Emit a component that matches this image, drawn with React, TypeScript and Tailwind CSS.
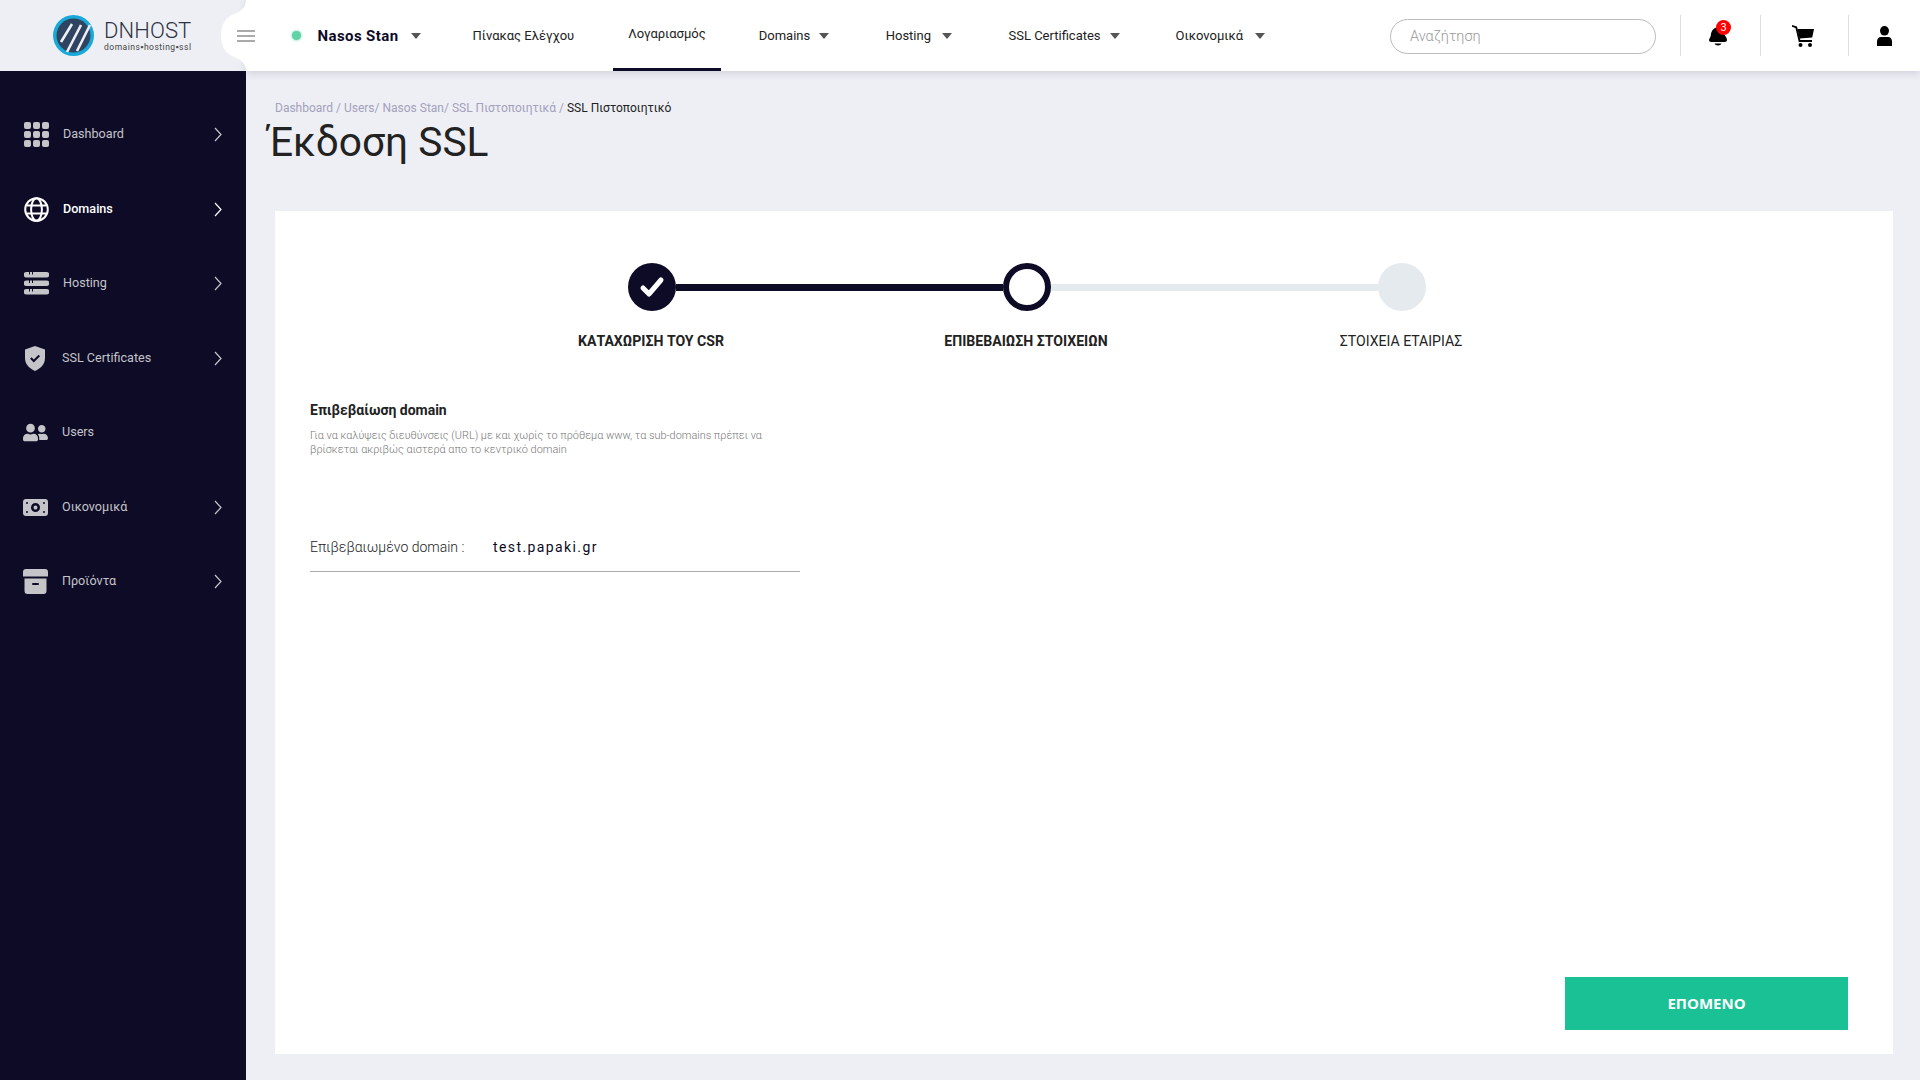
import React from 'react'
import { FaUserFriends } from 'react-icons/fa'

const GridIcon = () => (
  <svg width="25" height="25" viewBox="0 0 25 25" fill="currentColor">
    {[0, 9, 18].flatMap((y) =>
      [0, 9, 18].map((x) => <rect key={`${x}-${y}`} x={x} y={y} width="7" height="7" rx="2" />)
    )}
  </svg>
)

const GlobeIcon = () => (
  <svg width="25" height="25" viewBox="0 0 25 25" fill="none" stroke="currentColor" strokeWidth="2">
    <circle cx="12.5" cy="12.5" r="11.3" />
    <ellipse cx="12.5" cy="12.5" rx="5.4" ry="11.3" />
    <path d="M2.5 8.5h20M2.5 16.5h20" />
  </svg>
)

const ServerIcon = () => (
  <svg width="25" height="23" viewBox="0 0 25 23" fill="currentColor">
    <path d="M2.5 0H5v2.5h1V0h2v2.5h1V0h13.500a2.500 2.500 0 0 1 0 5.500H2.500a2.500 2.500 0 0 1 0-5.500z" />
    <path d="M2.500 8.500H5V11h1V8.500h2V11h1V8.500h13.500a2.500 2.500 0 0 1 0 5.500H2.500a2.500 2.500 0 0 1 0-5.500z" />
    <path d="M2.500 17H5v2.500h1V17h2v2.500h1V17h13.500a2.500 2.500 0 0 1 0 5.500H2.500a2.500 2.500 0 0 1 0-5.500z" />
  </svg>
)

const ShieldIcon = () => (
  <svg width="22" height="25" viewBox="0 0 22 25" fill="currentColor">
    <path d="M11 0 21 3.500V12c0 6.500-4.500 10.500-10 13C5.500 22.500 1 18.500 1 12V3.500z" />
    <path d="m6.800 12 3 3 5.500-5.500" fill="none" stroke="#0d0b26" strokeWidth="2" />
  </svg>
)

const MoneyIcon = () => (
  <svg width="25" height="17" viewBox="0 0 25 17" fill="currentColor">
    <path
      fillRule="evenodd"
      d="M3 0h19a3 3 0 0 1 3 3v11a3 3 0 0 1-3 3H3a3 3 0 0 1-3-3V3a3 3 0 0 1 3-3zm9.500 4a4.500 4.500 0 1 0 0 9 4.500 4.500 0 0 0 0-9zm0 2.500a2 2 0 1 1 0 4 2 2 0 0 1 0-4z"
    />
    <g fill="#0d0b26">
      <circle cx="4" cy="4" r="1" />
      <circle cx="21" cy="4" r="1" />
      <circle cx="4" cy="13" r="1" />
      <circle cx="21" cy="13" r="1" />
    </g>
  </svg>
)

const ArchiveIcon = () => (
  <svg width="25" height="25" viewBox="0 0 25 25" fill="currentColor">
    <path d="M3 0h19a3 3 0 0 1 3 3v4.500H0V3a3 3 0 0 1 3-3z" />
    <path d="M1.500 9.500h22V22a3 3 0 0 1-3 3h-16a3 3 0 0 1-3-3z" />
    <rect x="9" y="14" width="7" height="2" rx="1" fill="#0d0b26" />
  </svg>
)

const UserIcon = () => (
  <svg width="15" height="20" viewBox="0 0 15 20" fill="currentColor">
    <ellipse cx="7.500" cy="4.800" rx="4.500" ry="4.800" />
    <path d="M4 11h7c2.500 0 4 1.800 4 4.500V20H0v-4.500C0 12.800 1.500 11 4 11z" />
  </svg>
)

const BellIcon = () => (
  <svg width="18" height="19" viewBox="0 0 18 19" fill="currentColor">
    <path d="M10 0C5 0 2 4 1.800 8.500 1.700 10.500 0 11.500 0 13c0 1.200 1 2 2.200 2h13.600c1.200 0 2.200-.8 2.200-2 0-1-.5-2-1-3z" />
    <path d="M5.500 16.500h7c-.8 2.600-6.200 2.600-7 0z" />
  </svg>
)

const CartIcon = () => (
  <svg width="22" height="22" viewBox="0 0 22 22" fill="currentColor">
    <path d="M0 0l5 1.500L8.300 15H20v2H6.800L3.500 3 0 1.800z" />
    <path d="M5.500 4H22l-1.800 8.500L7.500 13.500z" />
    <circle cx="8.500" cy="20" r="2" />
    <circle cx="18" cy="20" r="2" />
  </svg>
)

const ChevronIcon = () => (
  <svg width="8" height="15" viewBox="0 0 8 15" fill="none" stroke="currentColor" strokeWidth="1.200" className="shrink-0">
    <path d="m1 1 6 6.500L1 14" />
  </svg>
)

const Logo = () => (
  <svg width="41" height="41" viewBox="0 0 41 41">
    <circle cx="20.500" cy="20.500" r="20.500" fill="#19a9d8" />
    <circle cx="20.500" cy="20.500" r="17" fill="#2e4460" />
    <path d="M8 27 19 9M14 37 28 10M24 36 37 10" stroke="#eeeff5" strokeWidth="2.600" fill="none" />
  </svg>
)

const Caret = () => <span className="w-0 h-0 border-x-[5.5px] border-x-transparent border-t-[6px] border-t-[#555]" />

const SIDEBAR = [
  { label: 'Dashboard', icon: <GridIcon />, chevron: true, active: false, left: 'gap-[14px] pl-6' },
  { label: 'Domains', icon: <GlobeIcon />, chevron: true, active: true, left: 'gap-[14px] pl-6' },
  { label: 'Hosting', icon: <ServerIcon />, chevron: true, active: false, left: 'gap-[14px] pl-6' },
  { label: 'SSL Certificates', icon: <ShieldIcon />, chevron: true, active: false, left: 'gap-4 pl-6' },
  { label: 'Users', icon: <FaUserFriends size={25} />, chevron: false, active: false, left: 'gap-[14px] pl-[23px]' },
  { label: 'Οικονομικά', icon: <MoneyIcon />, chevron: true, active: false, left: 'gap-[14px] pl-[23px]' },
  { label: 'Προϊόντα', icon: <ArchiveIcon />, chevron: true, active: false, left: 'gap-[14px] pl-[23px]' },
]

const NAV = [
  { label: 'Domains', margin: 'ml-[38px]', gap: 'gap-[9px]' },
  { label: 'Hosting', margin: 'ml-[56.5px]', gap: 'gap-[11px]' },
  { label: 'SSL Certificates', margin: 'ml-[56.5px]', gap: 'gap-[9px]' },
  { label: 'Οικονομικά', margin: 'ml-[56px]', gap: 'gap-3' },
]

const Header = () => (
  <header className="relative z-10 h-[71px] shrink-0 flex">
    <div className="w-[246px] shrink-0 bg-[#eeeff5] flex items-center pl-[53px] gap-[10px]">
      <Logo />
      <div className="flex flex-col pt-[2px]">
        <span className="text-[22px] leading-[18px] font-light text-[#2b3340] tracking-[0.1px]">DNHOST</span>
        <span className="text-[8.500px] leading-[9px] mt-[3px] text-[#444] tracking-[0.5px]">domains▪hosting▪ssl</span>
      </div>
    </div>
    <div className="flex-1 relative bg-white shadow-[0_2px_8px_rgba(60,60,90,0.18)] flex items-center">
      {/* white bulge that cuts into the logo panel */}
      <svg width="25" height="71" viewBox="0 0 25 71" fill="#fff" className="absolute -left-[25px] top-0">
        <path d="M25 0C25 8 19 12 11 15 4 18 0 26 0 35.500 0 45 4 53 11 56 19 59 25 63 25 71z" />
      </svg>
      <div className="relative flex flex-col gap-[3px] w-[18px] ml-[-9px]">
        <span className="h-[2px] bg-[#aaa]" />
        <span className="h-[2px] bg-[#aaa]" />
        <span className="h-[2px] bg-[#aaa]" />
      </div>
      <span className="ml-[37px] w-[9px] h-[9px] rounded-full bg-[#5fd3a6] shadow-[0_0_3px_#5fd3a6]" />
      <span className="ml-[16.500px] mt-[1px] text-[15px] tracking-[0.4px] font-bold text-[#0d0b26]">Nasos Stan</span>
      <span className="ml-[13px] flex"><Caret /></span>
      <span className="ml-[51px] text-[13px] text-[#222]">Πίνακας Ελέγχου</span>
      <div className="ml-[39px] h-full px-[15px] flex items-center border-b-[3px] border-[#0d0b26] text-[13px] text-[#222]">Λογαριασμός</div>
      {NAV.map((n) => (
        <div key={n.label} className={`${n.margin} ${n.gap} flex items-center text-[13px] text-[#222]`}>
          {n.label}
          <Caret />
        </div>
      ))}
      <input
        readOnly
        placeholder="Αναζήτηση"
        className="ml-auto mt-[1px] w-[266px] h-[35px] rounded-full border border-[#bbb] pl-[19px] text-[14.500px] font-light placeholder:text-[#999] outline-none"
      />
      <div className="ml-6 w-[80px] h-[41px] border-l border-[#ddd] flex items-center justify-center text-black relative">
        <span className="mt-[1px] -ml-[5px]"><BellIcon /></span>
        <span className="absolute left-[35px] top-[5px] w-[15px] h-[15px] rounded-full bg-[#f00] text-white text-[11px] leading-[15px] text-center">3</span>
      </div>
      <div className="w-[88px] h-[41px] border-l border-[#ddd] flex items-center justify-center text-black pr-[4px]">
        <CartIcon />
      </div>
      <div className="w-[72px] h-[41px] border-l border-[#ddd] flex items-center justify-center text-black pr-[1px]">
        <UserIcon />
      </div>
    </div>
  </header>
)

const Sidebar = () => (
  <aside className="w-[246px] shrink-0 bg-[#0d0b26] pt-[26.500px] flex flex-col">
    {SIDEBAR.map((item) => (
      <div
        key={item.label}
        className={`h-[74.500px] flex items-center pr-6 ${item.left} ${item.active ? 'text-white font-medium' : 'text-[#c4c4c9]'}`}
      >
        <span className="shrink-0">{item.icon}</span>
        <span className="text-[12.600px] flex-1">{item.label}</span>
        {item.chevron && <ChevronIcon />}
      </div>
    ))}
  </aside>
)

const Stepper = () => (
  <>
    <div className="ml-[353px] w-[798px] flex items-center">
      <div className="w-12 h-12 rounded-full bg-[#0d0b26] flex items-center justify-center">
        <svg width="28" height="24" viewBox="0 0 28 24" fill="none" stroke="#fff" strokeWidth="5" strokeLinecap="round" strokeLinejoin="round">
          <path d="m5 13 6 6L23 5" />
        </svg>
      </div>
      <div className="flex-1 h-[7px] bg-[#0d0b26]" />
      <div className="w-12 h-12 rounded-full border-[6px] border-[#0d0b26]" />
      <div className="flex-1 h-[7px] bg-[#e4eaee]" />
      <div className="w-12 h-12 rounded-full bg-[#e4eaee]" />
    </div>
    <div className="ml-[188.500px] w-[1125px] grid grid-cols-3 mt-[20px] text-center text-[14.100px] leading-5 text-[#222]">
      <span className="font-bold">ΚΑΤΑΧΩΡΙΣΗ ΤΟΥ CSR</span>
      <span className="font-bold">ΕΠΙΒΕΒΑΙΩΣΗ ΣΤΟΙΧΕΙΩΝ</span>
      <span>ΣΤΟΙΧΕΙΑ ΕΤΑΙΡΙΑΣ</span>
    </div>
  </>
)

export default function App() {
  return (
    <div className="w-full h-screen overflow-hidden flex flex-col bg-[#eeeff5] font-['Roboto',sans-serif]">
      <Header />
      <div className="flex-1 flex min-h-0">
        <Sidebar />
        <main className="flex-1 min-w-0 flex flex-col pl-[29px] pr-[27px] pb-[26px] pt-[29px]">
          <div className="text-[12px] leading-[16px] text-[#a3a1bb]">
            Dashboard / Users/ Nasos Stan/ SSL Πιστοποιητικά / <span className="text-[#222]">SSL Πιστοποιητικό</span>
          </div>
          <h1 className="-ml-[7px] mt-[3px] text-[40.700px] leading-[46px] text-[#222]">Έκδοση SSL</h1>
          <section className="flex-1 mt-[46px] bg-white pt-[52px] pb-6 flex flex-col">
            <Stepper />
            <div className="pl-[35px] mt-[49px]">
              <h2 className="text-[14px] leading-5 font-bold text-[#222]">Επιβεβαίωση domain</h2>
              <p className="mt-[9px] w-[490px] text-[10.900px] leading-[13.500px] font-light text-[#777]">
                Για να καλύψεις διευθύνσεις (URL) με και χωρίς το πρόθεμα www, τα sub-domains πρέπει να βρίσκεται ακριβώς αιστερά απο το κεντρικό domain
              </p>
              <div className="mt-[71px] w-[490px] h-[45px] border-b border-[#aaa] flex items-start pt-[10px] text-[14px] leading-5">
                <span className="w-[183px] font-light text-[#222]">Επιβεβαιωμένο domain :</span>
                <span className="text-[#0d0b26] tracking-[1.4px]">test.papaki.gr</span>
              </div>
            </div>
            <div className="mt-auto pr-[45px] flex justify-end">
              <button className="w-[283px] h-[53px] bg-[#19c194] text-white text-[15px] font-bold font-['Open_Sans',sans-serif]">ΕΠΟΜΕΝΟ</button>
            </div>
          </section>
        </main>
      </div>
    </div>
  )
}
